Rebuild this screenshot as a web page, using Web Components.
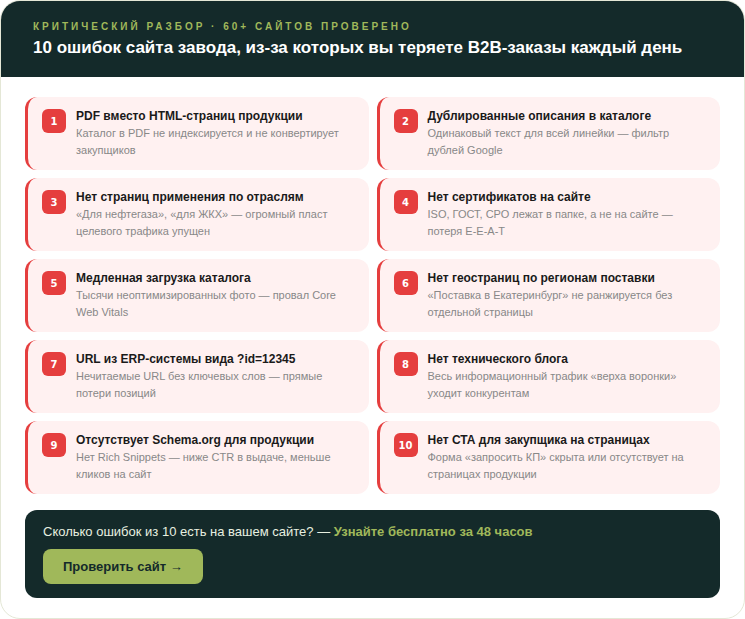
<!DOCTYPE html>
<html lang="ru">
<head>
<meta charset="utf-8">
<title>10 ошибок сайта завода</title>
<style>
    html, body { margin: 0; padding: 0; background: #fff; }
    body { font-family: "Liberation Sans", Arial, sans-serif; }
</style>
</head>
<body>
<audit-card>
    <audit-header slot="header" eyebrow="Критический разбор · 60+ сайтов проверено">10 ошибок сайта завода, из-за которых вы теряете B2B-заказы каждый день</audit-header>
    <error-item num="1" title="PDF вместо HTML-страниц продукции">Каталог в PDF не индексируется и не конвертирует закупщиков</error-item>
    <error-item num="2" title="Дублированные описания в каталоге">Одинаковый текст для всей линейки — фильтр дублей Google</error-item>
    <error-item num="3" title="Нет страниц применения по отраслям">«Для нефтегаза», «для ЖКХ» — огромный пласт целевого трафика упущен</error-item>
    <error-item num="4" title="Нет сертификатов на сайте">ISO, ГОСТ, СРО лежат в папке, а не на сайте — потеря E-E-A-T</error-item>
    <error-item num="5" title="Медленная загрузка каталога">Тысячи неоптимизированных фото — провал Core Web Vitals</error-item>
    <error-item num="6" title="Нет геостраниц по регионам поставки">«Поставка в Екатеринбург» не ранжируется без отдельной страницы</error-item>
    <error-item num="7" title="URL из ERP-системы вида ?id=12345">Нечитаемые URL без ключевых слов — прямые потери позиций</error-item>
    <error-item num="8" title="Нет технического блога">Весь информационный трафик «верха воронки» уходит конкурентам</error-item>
    <error-item num="9" title="Отсутствует Schema.org для продукции">Нет Rich Snippets — ниже CTR в выдаче, меньше кликов на сайт</error-item>
    <error-item num="10" title="Нет СТА для закупщика на страницах">Форма «запросить КП» скрыта или отсутствует на страницах продукции</error-item>
    <cta-box slot="footer" lead="Сколько ошибок из 10 есть на вашем сайте? — " accent="Узнайте бесплатно за 48 часов" button="Проверить сайт →"></cta-box>
</audit-card>

<script>
class AuditCard extends HTMLElement {
    constructor() {
        super();
        this.attachShadow({ mode: 'open' });
        this.shadowRoot.innerHTML = `
            <style>
                :host {
                    display: block;
                    box-sizing: border-box;
                    width: 745px;
                    height: 619px;
                    background: #fff;
                    border: 1px solid #e4e7d6;
                    border-radius: 20px;
                }
                .body {
                    padding: 20px 24px 20px;
                    display: flex;
                    flex-direction: column;
                    gap: 16px;
                }
                .grid {
                    display: grid;
                    grid-template-columns: 1fr 1fr;
                    gap: 8px;
                }
            </style>
            <slot name="header"></slot>
            <div class="body">
                <div class="grid"><slot></slot></div>
                <slot name="footer"></slot>
            </div>
        `;
    }
}

class AuditHeader extends HTMLElement {
    constructor() {
        super();
        this.attachShadow({ mode: 'open' });
    }

    connectedCallback() {
        this.shadowRoot.innerHTML = `
            <style>
                :host {
                    display: block;
                    background: #142a2a;
                    padding: 20px 32px 0;
                    height: 76px;
                    box-sizing: border-box;
                    border-radius: 19px 19px 0 0;
                }
                .eyebrow {
                    font-size: 10px;
                    font-weight: 700;
                    line-height: 12px;
                    letter-spacing: 3px;
                    text-transform: uppercase;
                    color: #a0b85a;
                    margin-bottom: 4px;
                    white-space: nowrap;
                }
                h1 {
                    margin: 0;
                    font-size: 17px;
                    font-weight: 700;
                    line-height: 22px;
                    color: #fff;
                    white-space: nowrap;
                }
            </style>
            <div class="eyebrow">${this.getAttribute('eyebrow')}</div>
            <h1><slot></slot></h1>
        `;
    }
}

class ErrorItem extends HTMLElement {
    constructor() {
        super();
        this.attachShadow({ mode: 'open' });
    }

    connectedCallback() {
        this.shadowRoot.innerHTML = `
            <style>
                :host {
                    display: flex;
                    align-items: flex-start;
                    gap: 10px;
                    box-sizing: border-box;
                    height: 73px;
                    padding: 12px 14px;
                    background: #fff1f1;
                    border-left: 3px solid #e53e3e;
                    border-radius: 12px;
                }
                .num {
                    flex: none;
                    width: 24px;
                    height: 24px;
                    border-radius: 6px;
                    background: #e53e3e;
                    color: #fff;
                    font-family: "DejaVu Sans", sans-serif;
                    font-size: 10px;
                    font-weight: 700;
                    display: flex;
                    align-items: center;
                    justify-content: center;
                }
                .title {
                    font-size: 12px;
                    font-weight: 700;
                    line-height: 14px;
                    color: #1a1a1a;
                    margin-bottom: 2px;
                }
                .desc {
                    font-size: 11px;
                    line-height: 17px;
                    color: #888;
                }
            </style>
            <div class="num">${this.getAttribute('num')}</div>
            <div>
                <div class="title">${this.getAttribute('title')}</div>
                <div class="desc"><slot></slot></div>
            </div>
        `;
    }
}

class CtaBox extends HTMLElement {
    constructor() {
        super();
        this.attachShadow({ mode: 'open' });
    }

    connectedCallback() {
        this.shadowRoot.innerHTML = `
            <style>
                :host {
                    display: block;
                    box-sizing: border-box;
                    height: 88px;
                    padding: 14px 18px;
                    background: #142a2a;
                    border-radius: 12px;
                }
                p {
                    margin: 0 0 10px;
                    font-size: 13px;
                    line-height: 15px;
                    color: #e8f0e0;
                }
                b { color: #a0b85a; }
                .btn {
                    display: inline-block;
                    box-sizing: border-box;
                    height: 35px;
                    line-height: 35px;
                    padding: 0 20px;
                    border-radius: 8px;
                    background: #a0b85a;
                    color: #142a2a;
                    font-size: 13px;
                    font-weight: 700;
                }
            </style>
            <p>${this.getAttribute('lead')}<b>${this.getAttribute('accent')}</b></p>
            <span class="btn">${this.getAttribute('button')}</span>
        `;
    }
}

customElements.define('audit-card', AuditCard);
customElements.define('audit-header', AuditHeader);
customElements.define('error-item', ErrorItem);
customElements.define('cta-box', CtaBox);
</script>
</body>
</html>
